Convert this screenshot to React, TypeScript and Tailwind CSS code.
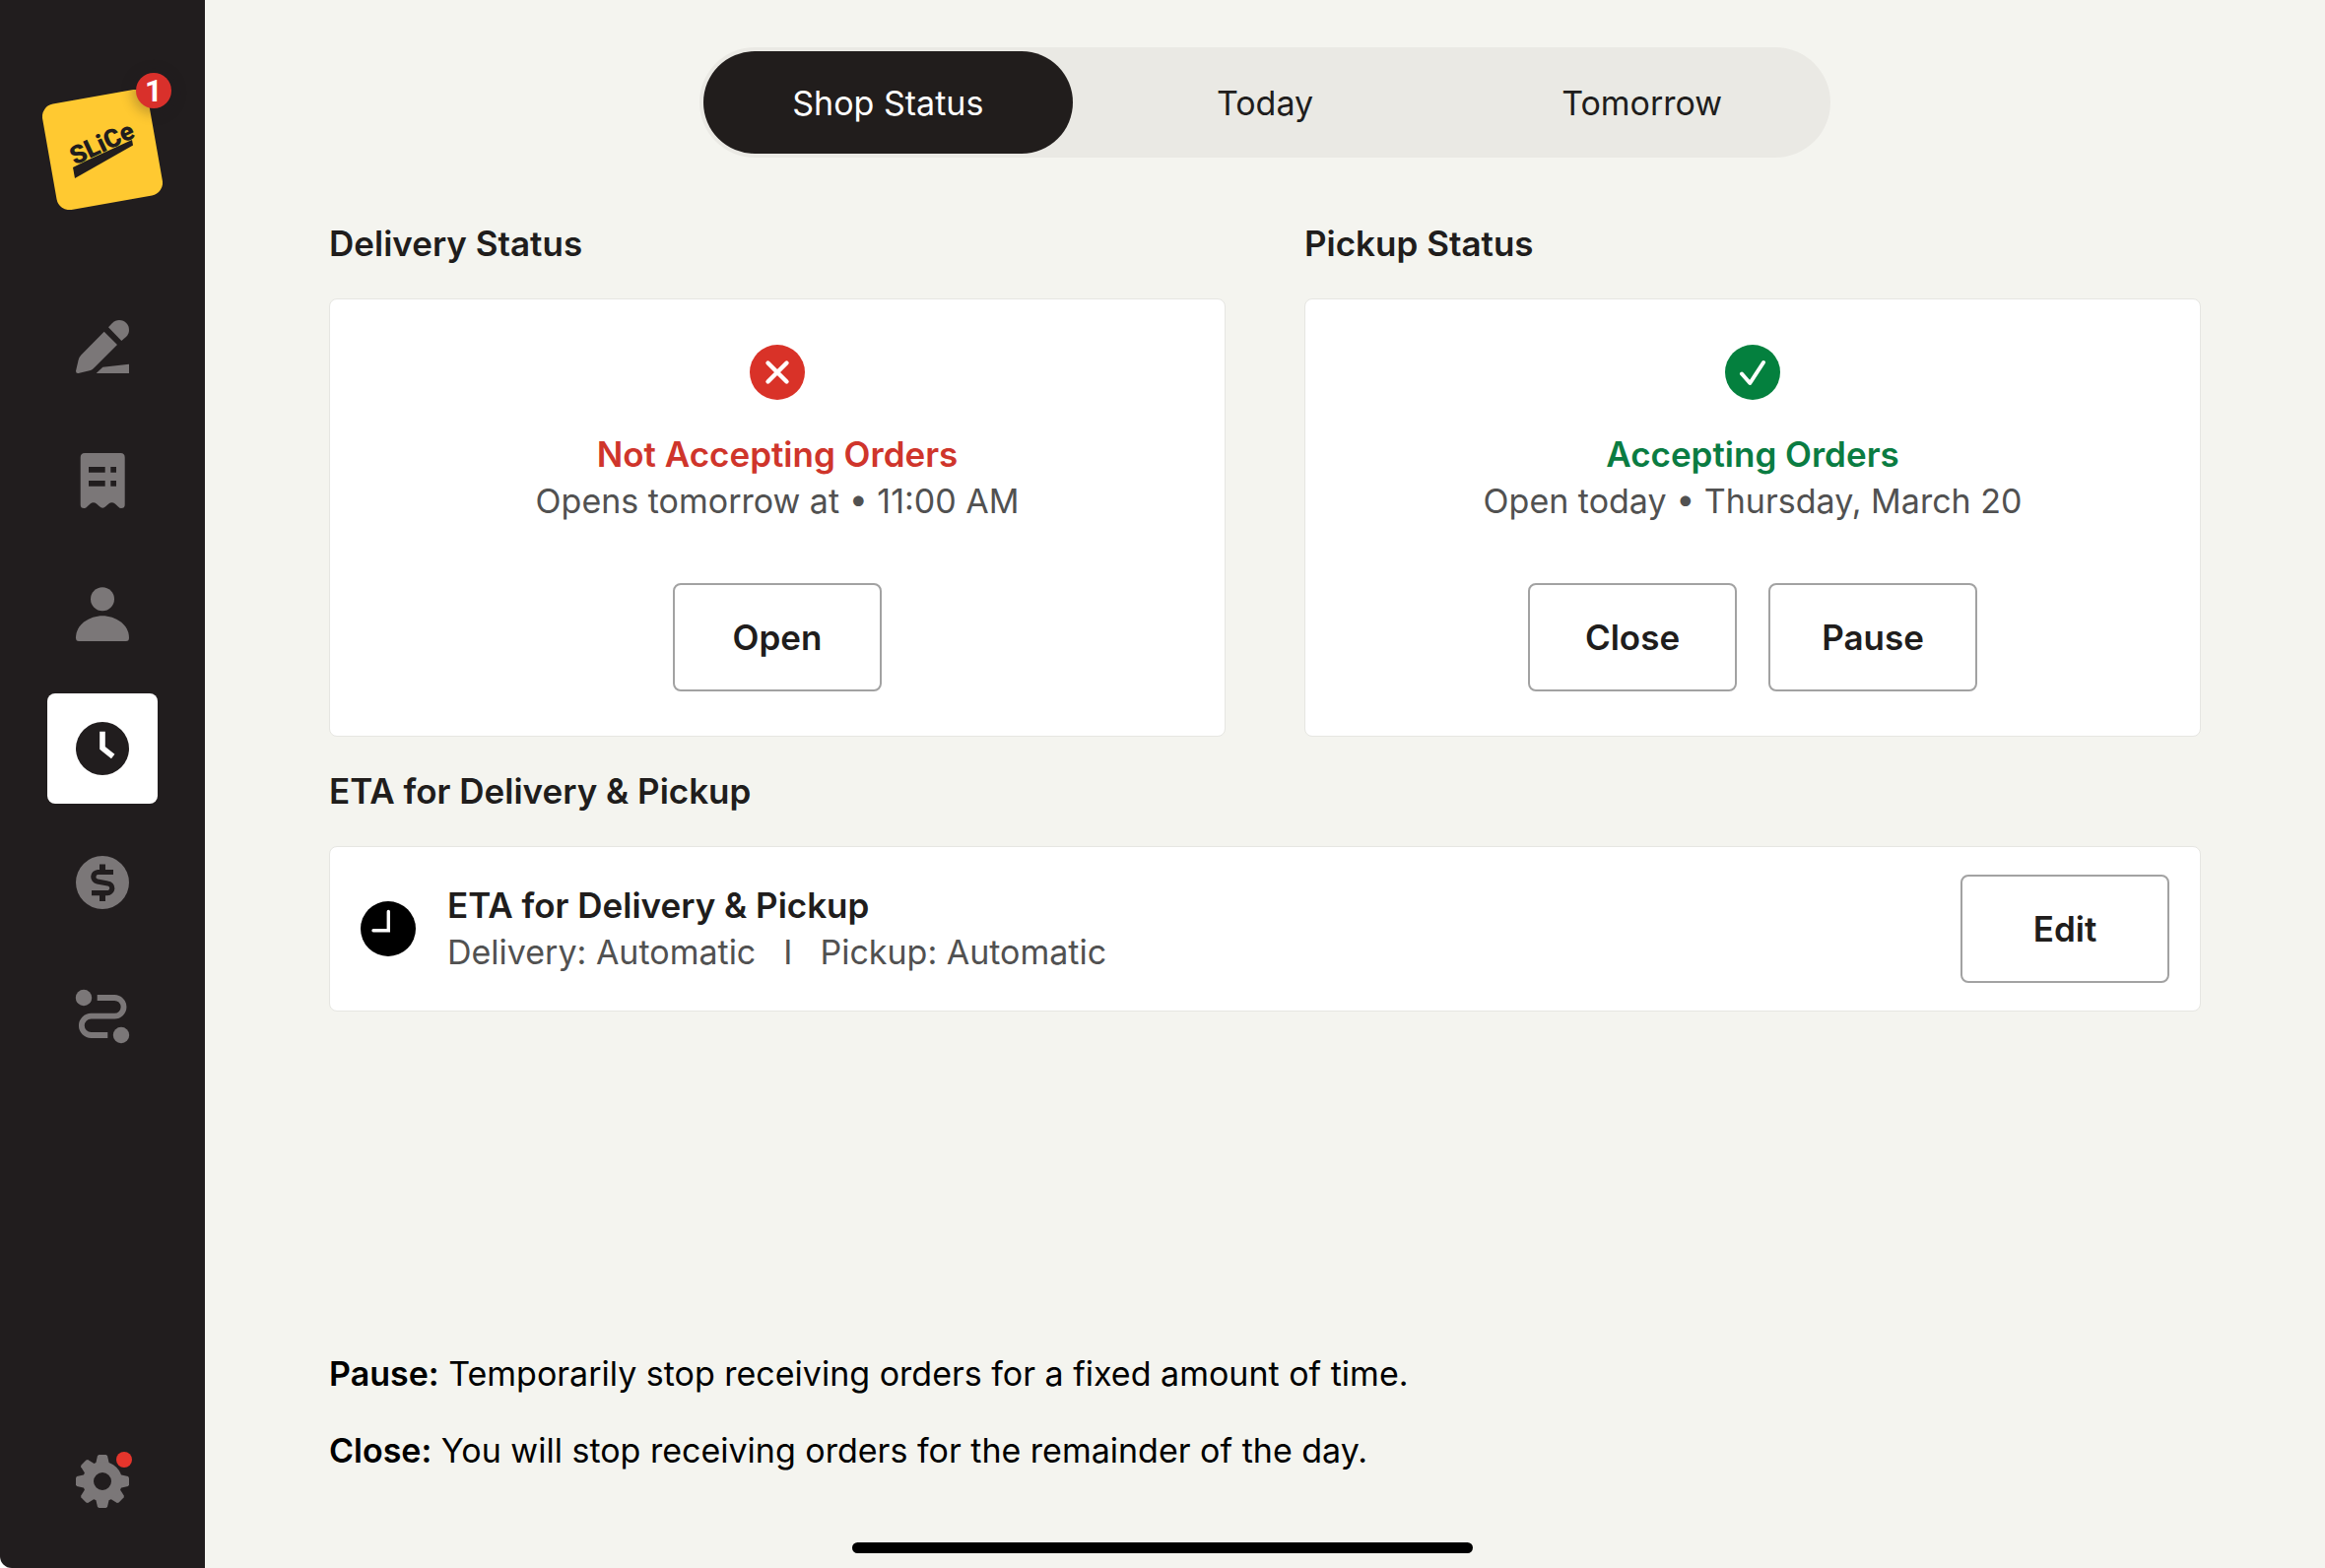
import { useState, type ReactNode } from "react";
import clsx from "clsx";

type IconProps = { className?: string };

const TABS = ["Shop Status", "Today", "Tomorrow"];

function NavIcon({ children }: { children: ReactNode }) {
  return (
    <svg viewBox="-1 -1 56 56" className="size-14" fill="currentColor" aria-hidden>
      {children}
    </svg>
  );
}

function PencilIcon() {
  return (
    <NavIcon>
      <path d="M28.7 11.7 42 25 19.5 47.5Q17.5 49.8 15 51L2.5 54Q0 54.3 0 51.7L2.6 40.5Q3.3 37.6 5.3 35.5Z" />
      <path d="M33 7.3 36.5 3.4C39 .8 41.5 0 44 0 50 0 54 4.5 54 10 54 12.6 53 15 51 17L46.3 21Z" />
      <path d="M20.7 54 27.3 47.7 54 44.7V54Z" />
    </NavIcon>
  );
}

function ReceiptIcon() {
  return (
    <NavIcon>
      <path
        fillRule="evenodd"
        d="M9-1H45.5Q49.7-1 49.7 3.5V51.5Q49.7 55 46 55 44.5 55 43 53.5L39.8 50.5Q36.5 47.8 33.3 50.5L30.5 53Q27.2 56.4 23.8 53L21 50.5Q17.8 47.8 14.6 50.5L11.4 53.5Q10 55 8.3 55 4.7 55 4.7 51.5V3.5Q4.7-1 9-1ZM13 13V18.7H29.7V13ZM35.3 13V18.7H41V13ZM13 27V32.7H29.7V27ZM35.3 27V32.7H41V27Z"
      />
    </NavIcon>
  );
}

function PersonIcon() {
  return (
    <NavIcon>
      <circle cx="27" cy="11.3" r="12" />
      <path d="M3 54Q0 54 0 50.5C0 37 14 28.3 27 28.3S54 37 54 50.5Q54 54 51 54Z" />
    </NavIcon>
  );
}

function ClockIcon() {
  return (
    <NavIcon>
      <circle cx="27" cy="27" r="27" />
      <path d="M27 9.7V26.5L37.7 35" fill="none" stroke="#fff" strokeWidth="5.6" />
    </NavIcon>
  );
}

function DollarIcon() {
  return (
    <NavIcon>
      <circle cx="27" cy="27" r="27" />
      <path
        d="M38 16.5H22.3A4.8 4.8 0 0 0 21.7 26L32.3 28A4.8 4.8 0 0 1 31.7 37.6H16"
        fill="none"
        stroke="#211d1e"
        strokeWidth="5.2"
      />
      <path d="M27 8.5V16M27 38V46" fill="none" stroke="#211d1e" strokeWidth="6" />
    </NavIcon>
  );
}

function RouteIcon() {
  return (
    <NavIcon>
      <circle cx="8" cy="8" r="8.2" />
      <circle cx="46" cy="46" r="8.2" />
      <path
        d="M21.7 8H39.2A9.35 9.35 0 0 1 39.2 26.7H15.5A9.65 9.65 0 0 0 15.5 46H32.3"
        fill="none"
        stroke="currentColor"
        strokeWidth="5.8"
      />
    </NavIcon>
  );
}

function GearIcon() {
  // the 45deg tooth is left out to make room for the notification dot
  const teeth = [0, 90, 135, 180, 225, 270, 315];
  return (
    <NavIcon>
      {teeth.map((deg) => (
        <path key={deg} d="M23.5 0H30.5L32 1 34.5 12H19.5L22 1Z" transform={`rotate(${deg} 27 27)`} />
      ))}
      <circle cx="27" cy="27" r="14.5" fill="none" stroke="currentColor" strokeWidth="11" />
    </NavIcon>
  );
}

function CrossBadge({ className }: IconProps) {
  return (
    <svg viewBox="0 0 56 56" className={className} aria-hidden>
      <circle cx="28" cy="28" r="28" fill="#d93228" />
      <path d="M18.5 18.5 37.5 37.5M37.5 18.5 18.5 37.5" stroke="#fff" strokeWidth="4.4" strokeLinecap="round" />
    </svg>
  );
}

function CheckBadge({ className }: IconProps) {
  return (
    <svg viewBox="0 0 56 56" className={className} aria-hidden>
      <circle cx="28" cy="28" r="28" fill="#04803e" />
      <path
        d="M17 29.5 25.3 39 39 18"
        fill="none"
        stroke="#fff"
        strokeWidth="4"
        strokeLinecap="round"
        strokeLinejoin="round"
      />
    </svg>
  );
}

function EtaClock({ className }: IconProps) {
  return (
    <svg viewBox="0 0 56 56" className={className} aria-hidden>
      <circle cx="28" cy="28" r="28" />
      <path d="M28.3 10.5V29.7H13" fill="none" stroke="#fff" strokeWidth="3.4" strokeLinecap="round" />
    </svg>
  );
}

function Logo() {
  return (
    <a href="#home" aria-label="Slice, 1 notification" className="relative block size-[122px]">
      <svg viewBox="0 0 122 122" className="size-full">
        <rect x="6.5" y="6.5" width="109" height="109" rx="13" fill="#ffc931" transform="rotate(-10 61 61)" />
        <text
          x="33"
          y="77"
          transform="rotate(-25 33 77)"
          fill="#211d1e"
          className="font-['Roboto',sans-serif] text-[26px] font-black"
        >
          SLiCe
        </text>
        <path d="M31 79 44 72.5 91 51 92 56.5 33 90Z" fill="#211d1e" />
      </svg>
      <span className="absolute -top-[17px] left-[95px] flex size-9 items-center justify-center rounded-full bg-[#d9302b] font-['Roboto',sans-serif] text-[31px] leading-none font-bold text-white shadow-[0_2px_12px_4px_rgba(33,29,30,0.25)]">
        1
      </span>
    </a>
  );
}

const NAV = [
  { label: "Edit menu", icon: <PencilIcon /> },
  { label: "Orders", icon: <ReceiptIcon /> },
  { label: "Customers", icon: <PersonIcon /> },
  { label: "Hours", icon: <ClockIcon /> },
  { label: "Payments", icon: <DollarIcon /> },
  { label: "Delivery routes", icon: <RouteIcon /> },
];

function Sidebar() {
  const [active, setActive] = useState("Hours");

  return (
    <aside className="flex w-52 shrink-0 flex-col items-center rounded-bl-xl bg-[#211d1e] pt-[91px] pb-8">
      <Logo />
      <nav className="mt-[83px] flex flex-col gap-6">
        {NAV.map(({ label, icon }) => (
          <button
            key={label}
            type="button"
            aria-label={label}
            onClick={() => setActive(label)}
            className={clsx(
              "flex size-28 items-center justify-center rounded-lg",
              active === label ? "bg-white text-[#211d1e]" : "text-[#7b7778]",
            )}
          >
            {icon}
          </button>
        ))}
      </nav>
      <button
        type="button"
        aria-label="Settings"
        className="relative mt-auto flex size-28 items-center justify-center text-[#7b7778]"
      >
        <GearIcon />
        <span className="absolute top-[26px] left-[70px] size-4 rounded-full bg-[#e5352c]" />
      </button>
    </aside>
  );
}

function OutlineButton({ children }: { children: ReactNode }) {
  return (
    <button
      type="button"
      className="h-[110px] w-[212px] rounded-lg border-2 border-[#a2a2a2] bg-white text-[35px] font-semibold"
    >
      {children}
    </button>
  );
}

function SectionTitle({ children }: { children: ReactNode }) {
  return <h2 className="text-[35px] leading-[47px] font-semibold">{children}</h2>;
}

type StatusCardProps = {
  title: string;
  icon: ReactNode;
  status: string;
  statusClassName: string;
  detail: string;
  actions: string[];
};

function StatusCard({ title, icon, status, statusClassName, detail, actions }: StatusCardProps) {
  return (
    <section className="flex flex-col gap-8">
      <SectionTitle>{title}</SectionTitle>
      <div className="flex flex-col items-center rounded-lg border border-[#e6e6e2] bg-white pt-[46px] pb-[45px]">
        {icon}
        <p className={clsx("mt-8 text-[35px] leading-[47px] font-semibold", statusClassName)}>{status}</p>
        <p className="leading-[47px] text-[#515151]">{detail}</p>
        <div className="mt-15 flex gap-8">
          {actions.map((action) => (
            <OutlineButton key={action}>{action}</OutlineButton>
          ))}
        </div>
      </div>
    </section>
  );
}

export default function App() {
  const [tab, setTab] = useState(TABS[0]);

  return (
    <div className="flex min-h-screen bg-white font-['Inter',sans-serif] text-[34px] text-[#201d1c]">
      <Sidebar />
      <main className="flex flex-1 flex-col bg-[#f4f4ef] px-[126px] pt-12 pb-24">
        <div role="tablist" className="mx-auto grid w-full max-w-[1148px] grid-cols-3 rounded-full bg-[#eae9e4] py-1">
          {TABS.map((name) => (
            <button
              key={name}
              type="button"
              role="tab"
              aria-selected={tab === name}
              onClick={() => setTab(name)}
              className={clsx("mx-1 h-[104px] rounded-full", tab === name && "bg-[#211d1c] text-white")}
            >
              {name}
            </button>
          ))}
        </div>

        <div className="mt-16 grid grid-cols-2 gap-20">
          <StatusCard
            title="Delivery Status"
            icon={<CrossBadge className="size-14" />}
            status="Not Accepting Orders"
            statusClassName="text-[#cf352b]"
            detail="Opens tomorrow at • 11:00 AM"
            actions={["Open"]}
          />
          <StatusCard
            title="Pickup Status"
            icon={<CheckBadge className="size-14" />}
            status="Accepting Orders"
            statusClassName="text-[#0a7c42]"
            detail="Open today • Thursday, March 20"
            actions={["Close", "Pause"]}
          />
        </div>

        <section className="mt-8 flex flex-col gap-8">
          <SectionTitle>ETA for Delivery &amp; Pickup</SectionTitle>
          <div className="flex items-center rounded-lg border border-[#e6e6e2] bg-white px-[31px] py-7">
            <EtaClock className="size-14" />
            <div className="ml-8 flex-1">
              <p className="text-[35px] leading-[47px] font-semibold">ETA for Delivery &amp; Pickup</p>
              <p className="flex gap-7 leading-[47px] text-[#515151]">
                <span>Delivery: Automatic</span>
                <span>I</span>
                <span>Pickup: Automatic</span>
              </p>
            </div>
            <OutlineButton>Edit</OutlineButton>
          </div>
        </section>

        <div className="mt-auto flex flex-col gap-8 pt-8 leading-[46px] text-black">
          <p>
            <strong className="font-semibold">Pause:</strong> Temporarily stop receiving orders for a fixed amount of
            time.
          </p>
          <p>
            <strong className="font-semibold">Close:</strong> You will stop receiving orders for the remainder of the
            day.
          </p>
        </div>
      </main>
      <div className="fixed inset-x-0 bottom-[15px] mx-auto h-[11px] w-[630px] rounded-full bg-black" />
    </div>
  );
}
